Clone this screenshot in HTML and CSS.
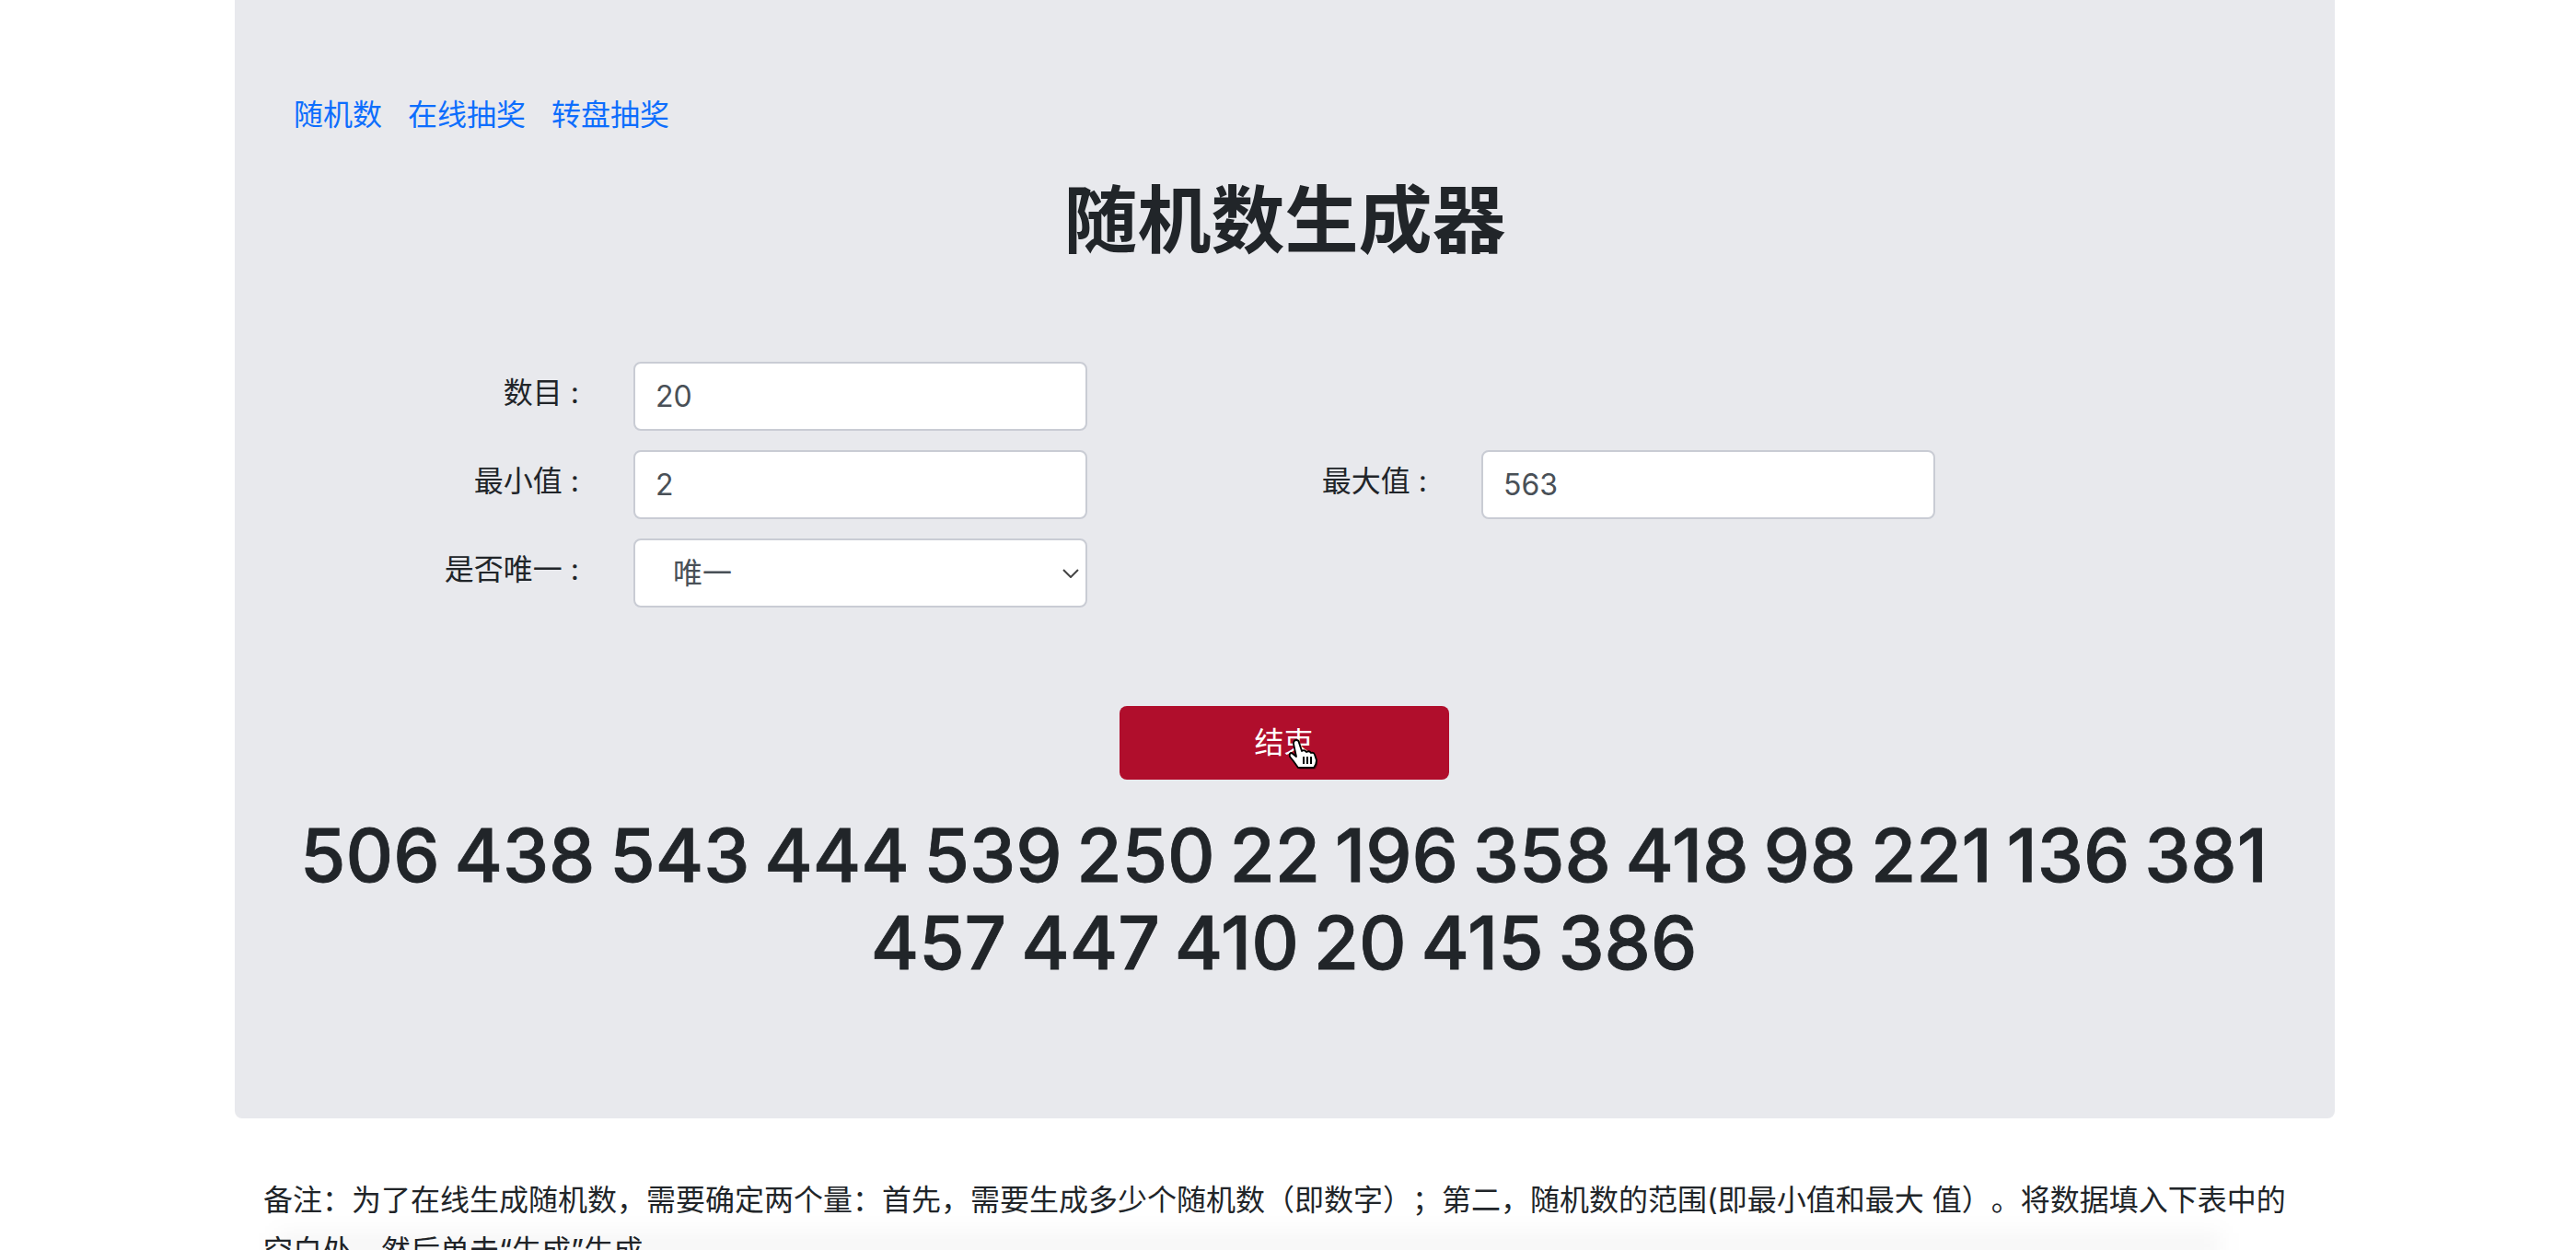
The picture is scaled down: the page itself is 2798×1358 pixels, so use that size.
FILE: index.html
```html
<!DOCTYPE html>
<html lang="zh-CN">
<head>
    <meta charset="UTF-8">
    <title>随机数生成器</title>
    <link rel="stylesheet" href="styles.css">
</head>
<body>
    <div class="container">
        <div class="panel">
            <nav class="links">
                <a href="#">随机数</a>
                <a href="#">在线抽奖</a>
                <a href="#">转盘抽奖</a>
            </nav>
            <h1>随机数生成器</h1>

            <form class="form">
                <div class="form-row">
                    <div class="field">
                        <label>数目 :</label>
                        <input type="text" value="20">
                    </div>
                </div>
                <div class="form-row">
                    <div class="field">
                        <label>最小值 :</label>
                        <input type="text" value="2">
                    </div>
                    <div class="field">
                        <label>最大值 :</label>
                        <input type="text" value="563">
                    </div>
                </div>
                <div class="form-row">
                    <div class="field">
                        <label>是否唯一 :</label>
                        <select>
                            <option>唯一</option>
                            <option>不唯一</option>
                        </select>
                    </div>
                </div>
            </form>

            <div class="action">
                <button type="button" class="stop-btn">结束
                    <svg class="cursor" viewBox="0 0 31 33" width="31" height="33">
                        <path d="M10 31 L5 24 L1 19 Q0 15 3 15 L8 19 L5 5 Q5 1 8 1 Q11 1 11 4 L14 13 Q17 11 19 14 Q22 12 24 15 Q27 14 28 17 L30 23 Q30 27 27 31 Z" fill="#000" opacity="0.45" transform="translate(1.5 1.5)"/>
                        <path d="M10 31 L5 24 L1 19 Q0 15 3 15 L8 19 L5 5 Q5 1 8 1 Q11 1 11 4 L14 13 Q17 11 19 14 Q22 12 24 15 Q27 14 28 17 L30 23 Q30 27 27 31 Z" fill="#fff" stroke="#000" stroke-width="1.8" stroke-linejoin="round"/>
                        <path d="M16 19 V27 M20 19 V27 M24 19 V27" stroke="#000" stroke-width="2" fill="none"/>
                    </svg>
                </button>
            </div>

            <div class="numbers">506 438 543 444 539 250 22 196 358 418 98 221 136 381 457 447 410 20 415 386</div>
        </div>

        <p class="note">备注：为了在线生成随机数，需要确定两个量：首先，需要生成多少个随机数（即数字）；第二，随机数的范围(即最小值和最大 值）。将数据填入下表中的空白处，然后单击“生成”生成。</p>
    </div>
    <div class="bottom-fade"></div>
</body>
</html>
```

FILE: styles.css
```css
html, body {
    height: 100%;
    overflow: hidden;
}

body {
    margin: 0;
    background: #fff;
    color: #212529;
    font-family: Inter, "Noto Sans CJK SC", sans-serif;
    font-size: 32px;
    line-height: 48px;
}

.container {
    width: 2281px;
    margin-left: 255px;
}

.panel {
    background: #e8e9ed;
    border-radius: 0 0 8px 8px;
    padding: 101px 64px 144px;
}

.links {
    display: flex;
    gap: 28px;
}

.links a {
    color: #0d6efd;
    text-decoration: none;
}

h1 {
    margin: 42px 0 106px;
    font-size: 80px;
    line-height: 96px;
    font-weight: 700;
    text-align: center;
}

.form {
    margin-left: 129px;
    display: flex;
    flex-direction: column;
    gap: 21px;
}

.form-row {
    display: flex;
}

.field {
    width: 921px;
    display: flex;
    align-items: center;
}

.field label {
    width: 181px;
    margin-right: 59px;
    padding-bottom: 7px;
    text-align: right;
    white-space: nowrap;
}

.field input,
.field select {
    width: 493px;
    height: 75px;
    box-sizing: border-box;
    background-color: #fff;
    border: 2px solid #c9ccd4;
    border-radius: 8px;
    color: #495057;
    font: inherit;
    outline: none;
}

.field input {
    padding: 0 22px;
}

.field select {
    padding: 0 41px;
    appearance: none;
    background-image: url("data:image/svg+xml,%3Csvg xmlns='http://www.w3.org/2000/svg' viewBox='0 0 18 10'%3E%3Cpath d='M1 1l8 8 8-8' fill='none' stroke='%23444' stroke-width='2'/%3E%3C/svg%3E");
    background-repeat: no-repeat;
    background-position: right 7px center;
    background-size: 18px 10px;
}

.action {
    margin-top: 107px;
    padding-right: 2px;
    display: flex;
    justify-content: center;
}

.stop-btn {
    position: relative;
    width: 358px;
    height: 80px;
    padding: 0;
    background: #b00e2c;
    border: none;
    border-radius: 8px;
    color: #fff;
    font: inherit;
}

.cursor {
    position: absolute;
    left: 184px;
    top: 36px;
}

.numbers {
    margin-top: 34px;
    padding-right: 2px;
    font-size: 80px;
    line-height: 95px;
    font-weight: 500;
    -webkit-text-stroke: 0.8px #212529;
    word-spacing: -5.5px;
    text-align: center;
}

.note {
    margin: 61px 0 0 31px;
    width: 2210px;
    line-height: 55px;
    text-spacing-trim: space-all;
}

.bottom-fade {
    position: fixed;
    left: 300px;
    right: 385px;
    bottom: -8px;
    height: 26px;
    background: rgba(0, 0, 0, 0.04);
    filter: blur(12px);
}
```
